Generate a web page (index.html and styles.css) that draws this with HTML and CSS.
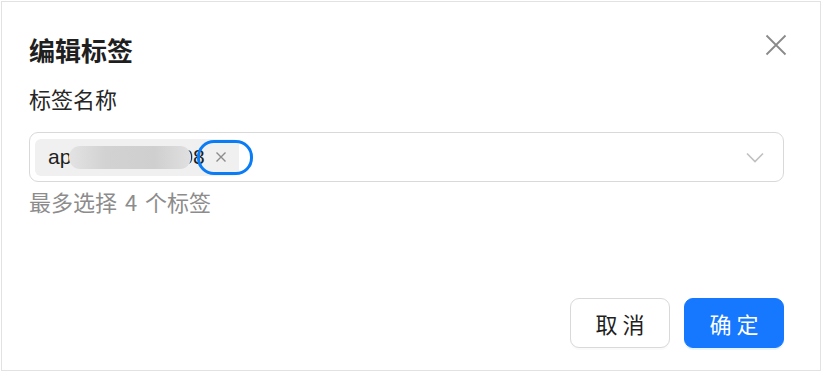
FILE: index.html
```html
<!DOCTYPE html>
<html lang="zh-CN">
<head>
<meta charset="utf-8">
<title>编辑标签</title>
<link rel="stylesheet" href="styles.css">
</head>
<body>
<div class="dialog">
  <div class="header">
    <h1 class="title">编辑标签</h1>
    <button class="close" aria-label="关闭">
      <svg width="22" height="22" viewBox="0 0 22 22"><path d="M1.5 1.5L20.5 20.5M20.5 1.5L1.5 20.5" stroke="#8a8a8a" stroke-width="1.8" fill="none"/></svg>
    </button>
  </div>
  <div class="field">
    <label class="label">标签名称</label>
    <div class="select">
      <div class="tags">
        <span class="tag">
          <span class="tag-text">ap<span class="blur"></span>08</span>
          <span class="tag-close">
            <svg width="12" height="12" viewBox="0 0 12 12"><path d="M1.5 1.5L10.5 10.5M10.5 1.5L1.5 10.5" stroke="#8c8c8c" stroke-width="1.4" fill="none"/></svg>
          </span>
          <span class="focus-ring"></span>
        </span>
      </div>
      <svg class="arrow" width="18" height="11" viewBox="0 0 18 11"><path d="M1 1.5L9 9.5L17 1.5" stroke="#c0c0c0" stroke-width="1.6" fill="none"/></svg>
    </div>
    <div class="help">最多选择 4 个标签</div>
  </div>
  <div class="footer">
    <button class="btn">取 消</button>
    <button class="btn primary">确 定</button>
  </div>
</div>
</body>
</html>
```

FILE: styles.css
```css
* { box-sizing: border-box; }
html, body { margin: 0; padding: 0; background: #fff; }
body { font-family: "Noto Sans CJK SC", "Noto Sans", sans-serif; color: #1f1f1f; }
.dialog {
  margin: 1px 0 0 1px;
  width: 820px;
  height: 370px;
  border: 1px solid #e2e2e2;
  padding: 0 36px 0 27px;
  display: flex;
  flex-direction: column;
}
.header {
  display: flex;
  justify-content: space-between;
  align-items: flex-start;
  padding-top: 32px;
}
.title {
  margin: 0;
  font-size: 26px;
  font-weight: 700;
  line-height: 32px;
  color: #1f1f1f;
}
.close {
  border: 0;
  background: none;
  padding: 0;
  margin-right: -3px;
  width: 22px;
  height: 22px;
  display: flex;
  cursor: pointer;
}
.field { display: flex; flex-direction: column; }
.label {
  font-size: 22px;
  line-height: 30px;
  color: #262626;
  margin-top: 17px;
}
.select {
  margin-top: 19px;
  height: 50px;
  border: 1px solid #d9d9d9;
  border-radius: 9px;
  display: flex;
  align-items: center;
  justify-content: space-between;
  padding: 0 19px 0 5px;
}
.tags { display: flex; align-items: center; }
.tag {
  position: relative;
  display: flex;
  align-items: center;
  height: 37px;
  background: #f0f0f0;
  border-radius: 6px;
  padding: 0 12px 0 13px;
}
.tag-text {
  font-family: "Liberation Sans", "Noto Sans", sans-serif;
  font-size: 21px;
  color: #1f1f1f;
  display: flex;
  align-items: center;
}
.blur {
  display: inline-block;
  width: 122px;
  height: 23px;
  margin: 0 -10px 0 -2px;
  background: linear-gradient(90deg, #e3e3e3, #d2d2d2 30%, #cfcfcf 70%, #e0e0e0);
  border-radius: 11px;
  position: relative;
  z-index: 1;
}
.tag-close { display: flex; margin-left: 10px; }
.focus-ring {
  position: absolute;
  left: 162px;
  top: 1px;
  width: 56px;
  height: 35px;
  border: 3px solid #0a7cf5;
  border-radius: 17px;
}
.arrow { display: block; }
.help {
  margin-top: 4px;
  font-size: 22px;
  line-height: 30px;
  color: #8c8c8c;
  word-spacing: 3px;
}
.footer {
  margin-top: auto;
  display: flex;
  justify-content: flex-end;
  gap: 14px;
  padding-bottom: 22px;
}
.btn {
  width: 100px;
  height: 50px;
  border: 1px solid #d9d9d9;
  border-radius: 9px;
  background: #fff;
  font-family: "Noto Sans CJK SC", sans-serif;
  font-size: 22px;
  color: #1f1f1f;
  box-shadow: 0 2px 0 rgba(0,0,0,0.02);
  cursor: pointer;
}
.btn.primary {
  background: #1677ff;
  border-color: #1677ff;
  color: #fff;
  box-shadow: 0 2px 0 rgba(5,145,255,0.1);
}
```
